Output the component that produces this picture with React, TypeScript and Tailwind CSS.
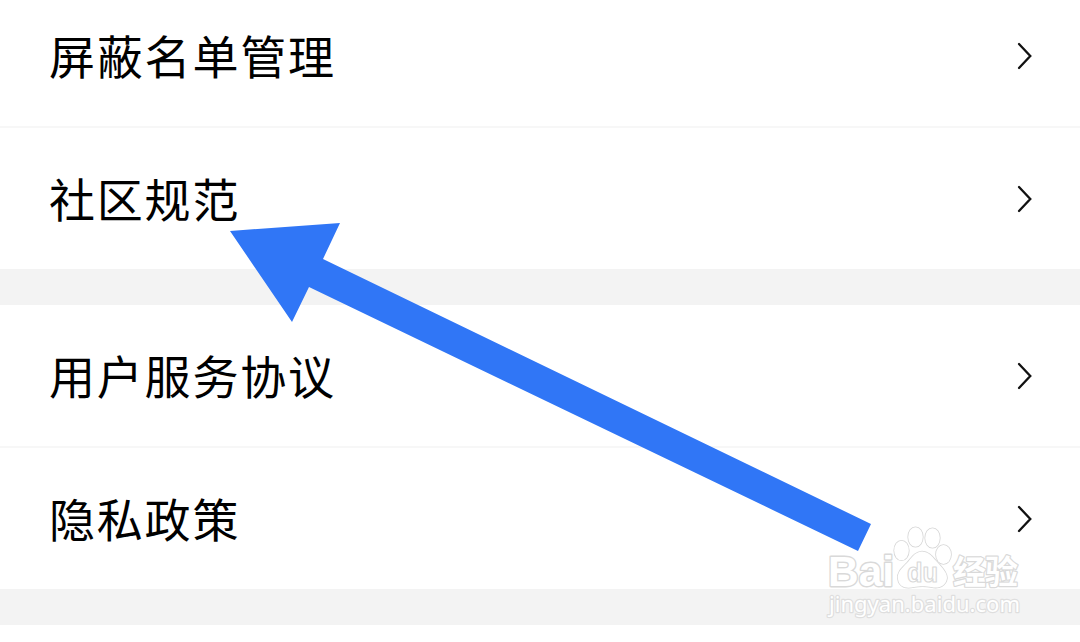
interface RowProps {
  label: string
  divider?: boolean
}

function Row({ label, divider }: RowProps) {
  return (
    <button
      className={
        divider
          ? 'flex h-[143px] w-full items-center justify-between border-b-2 border-[#f7f7f7] bg-white pr-12 pl-[49px] text-left'
          : 'flex h-[141px] w-full items-center justify-between bg-white pr-12 pl-[49px] text-left'
      }
    >
      <span className="pb-1 text-[46px] leading-[60px] tracking-[1.8px] text-black">{label}</span>
      <svg width="16" height="30" viewBox="0 0 16 30" fill="none" stroke="#111" strokeWidth="2.3" strokeLinecap="round">
        <path d="M3 3 L14.3 15 L3 27" />
      </svg>
    </button>
  )
}

function Arrow() {
  return (
    <svg className="absolute top-0 left-0" width="1080" height="642" viewBox="0 0 1080 642">
      <path d="M230 231 L340 223 L323 259 L871 524 L858 551 L309 287 L292 322 Z" fill="#3076f6" />
    </svg>
  )
}

function Watermark() {
  return (
    <svg
      className="absolute top-[520px] left-[820px]"
      width="210"
      height="105"
      viewBox="0 0 210 105"
      fill="#fff"
      stroke="#d9d9d9"
      strokeWidth="2.8"
      strokeLinejoin="round"
      paintOrder="stroke"
    >
      <text x="8" y="66" fontSize="43" fontWeight="700" textLength="66" lengthAdjust="spacingAndGlyphs" fontFamily="Liberation Sans, sans-serif">
        Bai
      </text>
      <g strokeWidth="1.6" stroke="#d6d6d6">
        <ellipse cx="81.500" cy="30.500" rx="7.300" ry="9.800" />
        <ellipse cx="95.500" cy="17" rx="7.300" ry="9.800" />
        <ellipse cx="112.500" cy="18" rx="7.300" ry="9.800" />
        <ellipse cx="123.500" cy="34.500" rx="7.500" ry="9.500" />
        <path d="M102 31.500 C94 32 91 39 87 43 C82 48 77 52 78 59 C79 67 86 69 94 67 C99 66 106 66 111 67 C119 69 126 66 127 58 C127 52 122 48 118 43 C113 38 110 32 102 31.500 Z" />
      </g>
      <text
        x="87"
        y="62"
        fontSize="27"
        fontWeight="700"
        strokeWidth="1.2"
        paintOrder="normal"
        textLength="31"
        lengthAdjust="spacingAndGlyphs"
        fontFamily="Liberation Sans, sans-serif"
      >
        du
      </text>
      <text x="133" y="64" fontSize="33" fontWeight="700" textLength="65" strokeWidth="2.4" fontFamily="Noto Sans CJK SC, sans-serif">
        经验
      </text>
      <text x="9" y="92" fontSize="22" textLength="191" stroke="#dedede" strokeWidth="2.4" fontFamily="Noto Sans, sans-serif">
        jingyan.baidu.com
      </text>
    </svg>
  )
}

export default function App() {
  return (
    <main className="relative flex h-[642px] w-[1080px] flex-col justify-end overflow-hidden bg-[#f3f3f3] font-['Noto_Sans_CJK_SC',sans-serif]">
      <section>
        <Row label="屏蔽名单管理" divider />
        <Row label="社区规范" />
      </section>
      <section className="mt-9">
        <Row label="用户服务协议" divider />
        <Row label="隐私政策" />
      </section>
      <section className="mt-9 h-[17px] shrink-0 bg-white" />
      <Arrow />
      <Watermark />
    </main>
  )
}
